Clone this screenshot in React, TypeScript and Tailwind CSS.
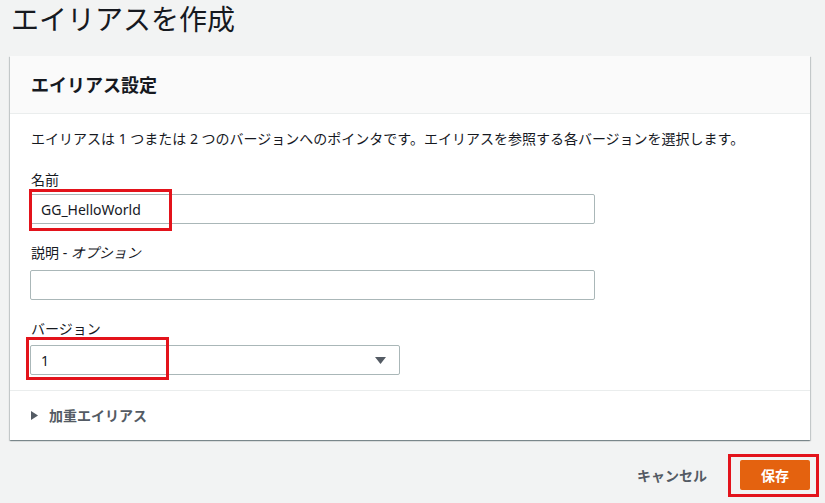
import React from "react";

export default function App() {
  const font = { fontFamily: '"Noto Sans", "Noto Sans CJK JP", sans-serif' };
  return (
    <div
      className="relative w-[825px] h-[503px] overflow-hidden bg-[#f2f3f3] text-[#16191f] pl-[10px] pr-[15px]"
      style={font}
    >
      <h1 className="pl-[1px] text-[28px] leading-[38px] font-normal text-[#16191f]">エイリアスを作成</h1>

      <div className="mt-[18px] bg-white shadow-[0_1px_1px_0_rgba(0,28,36,0.3),1px_1px_1px_0_rgba(0,28,36,0.15),-1px_1px_1px_0_rgba(0,28,36,0.15)]">
        <div className="h-[58px] flex items-center pl-[21px] bg-[#fafafa] border-b border-[#eaeded]">
          <h2 className="text-[18px] font-bold leading-[22px]">エイリアス設定</h2>
        </div>

        <div className="pl-[20px] pr-[20px] pt-[15px] pb-[15px]">
          <p className="text-[14px] leading-[20px] pl-[1px]">
            エイリアスは 1 つまたは 2 つのバージョンへのポインタです。エイリアスを参照する各バージョンを選択します。
          </p>

          <div className="mt-[21px]">
            <div className="text-[14px] leading-[20px] pl-[1px]">名前</div>
            <div className="mt-[4px] w-[565px] h-[30px] border border-[#aab7b8] rounded-[2px] flex items-center pl-[10px] text-[14px]">
              GG_HelloWorld
            </div>
          </div>

          <div className="mt-[19px]">
            <div className="text-[14px] leading-[20px] pl-[1px]">
              説明 - <span className="italic">オプション</span>
            </div>
            <div className="mt-[7px] w-[565px] h-[30px] border border-[#aab7b8] rounded-[2px]" />
          </div>

          <div className="mt-[19px]">
            <div className="text-[14px] leading-[20px] pl-[1px]">バージョン</div>
            <div className="mt-[6px] w-[370px] h-[30px] border border-[#aab7b8] rounded-[2px] flex items-center justify-between pl-[10px] pr-[13px] text-[14px]">
              <span>1</span>
              <svg width="11" height="7" viewBox="0 0 11 7">
                <path d="M0 0 H11 L5.5 7 Z" fill="#545b64" />
              </svg>
            </div>
          </div>
        </div>

        <div className="h-[50px] border-t border-[#eaeded] flex items-center pl-[21px]">
          <svg width="7" height="9" viewBox="0 0 7 9" className="mr-[11px]">
            <path d="M0 0 L7 4.5 L0 9 Z" fill="#545b64" />
          </svg>
          <span className="text-[14px] font-bold text-[#545b64]">加重エイリアス</span>
        </div>
      </div>

      <div className="mt-[20px] flex items-center justify-end">
        <span className="text-[14px] font-bold text-[#545b64] mr-[33px]">キャンセル</span>
        <div className="w-[70px] h-[30px] rounded-[2px] bg-[#e4620f] flex items-center justify-center text-white text-[14px] font-bold">
          保存
        </div>
      </div>

      <div className="absolute left-[29px] top-[189px] w-[143px] h-[42px] border-[3px] border-[#e3131b]" />
      <div className="absolute left-[26px] top-[337px] w-[143px] h-[43px] border-[3px] border-[#e3131b]" />
      <div className="absolute left-[728px] top-[454px] w-[91px] h-[43px] border-[3px] border-[#e3131b]" />
    </div>
  );
}
